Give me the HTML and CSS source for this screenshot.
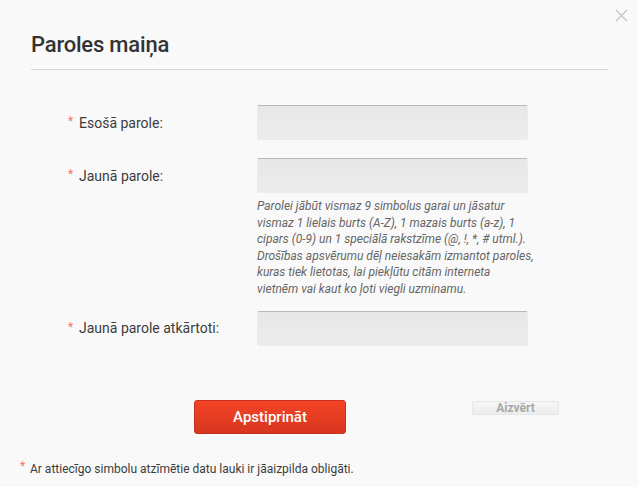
FILE: index.html
```
<!DOCTYPE html>
<html lang="lv">
<head>
<meta charset="utf-8">
<title>Paroles maiņa</title>
<link rel="stylesheet" href="styles.css">
</head>
<body>
<div class="dialog">
  <button class="close" aria-label="Aizvērt">
    <svg width="13" height="13" viewBox="0 0 13 13"><path d="M1 1L12 12M12 1L1 12" stroke="#c4c4c4" stroke-width="1.3" fill="none"/></svg>
  </button>
  <h1 class="title">Paroles maiņa</h1>
  <form class="form">
    <div class="row">
      <label class="label"><span class="req">*</span>Esošā parole:</label>
      <input class="field" type="password">
    </div>
    <div class="row row-second">
      <label class="label"><span class="req">*</span>Jaunā parole:</label>
      <input class="field" type="password">
    </div>
    <p class="hint">Parolei jābūt vismaz 9 simbolus garai un jāsatur<br>vismaz 1 lielais burts (A-Z), 1 mazais burts (a-z), 1<br>cipars (0-9) un 1 speciālā rakstzīme (@, !, *, # utml.).<br>Drošības apsvērumu dēļ neiesakām izmantot paroles,<br>kuras tiek lietotas, lai piekļūtu citām interneta<br>vietnēm vai kaut ko ļoti viegli uzminamu.</p>
    <div class="row row-third">
      <label class="label"><span class="req">*</span>Jaunā parole atkārtoti:</label>
      <input class="field" type="password">
    </div>
    <div class="actions">
      <button type="button" class="btn-primary">Apstiprināt</button>
      <button type="button" class="btn-secondary">Aizvērt</button>
    </div>
  </form>
  <p class="note"><span class="req">*</span>Ar attiecīgo simbolu atzīmētie datu lauki ir jāaizpilda obligāti.</p>
</div>
</body>
</html>
```
FILE: styles.css
```
html, body {
  margin: 0;
  padding: 0;
  background: #f9f9f9;
}
body {
  font-family: Roboto, "Liberation Sans", sans-serif;
  color: #3a3a3a;
}
.dialog {
  position: relative;
  width: 638px;
  height: 487px;
  box-sizing: border-box;
  padding: 0 30px 0 31px;
}
.close {
  position: absolute;
  top: 9px;
  right: 10px;
  padding: 0;
  border: 0;
  background: none;
  width: 13px;
  height: 13px;
}
.close svg { display: block; }
.title {
  margin: 0;
  padding-top: 31px;
  height: 38px;
  font-size: 22px;
  font-weight: 500;
  line-height: 28px;
  color: #333;
  border-bottom: 1px solid #d6d6d6;
  letter-spacing: -0.2px;
}
.form {
  margin: 0;
  padding-top: 34px;
}
.row {
  display: flex;
  align-items: center;
  height: 37px;
}
.row-second { margin-top: 16px; }
.row-third { margin-top: 12px; }
.label {
  display: flex;
  align-items: center;
  width: 189px;
  padding-left: 37px;
  font-size: 14px;
  color: #3c3c3c;
}
.req {
  color: #f07563;
  font-size: 12px;
  width: 11px;
  margin-top: -3px;
}
.field {
  box-sizing: border-box;
  width: 271px;
  height: 35px;
  margin: 0;
  border: 1px solid #ececec;
  border-top: 1px solid #b8b8b8;
  border-radius: 2px;
  background: linear-gradient(#e7e7e7, #ececec);
}
.hint {
  margin: 4px 0 0 226px;
  font-size: 12px;
  font-style: italic;
  line-height: 16.6px;
  color: #666;
}
.actions {
  display: flex;
  align-items: flex-start;
  margin-top: 53px;
  padding-left: 163px;
}
.btn-primary {
  width: 152px;
  height: 34px;
  border: 1px solid #c5331e;
  border-radius: 3px;
  background: linear-gradient(#f54427, #d7361e);
  color: #fff;
  font-family: Roboto, "Liberation Sans", sans-serif;
  font-size: 15px;
  font-weight: 500;
  padding: 0;
}
.btn-secondary {
  margin-left: 126px;
  margin-top: 1px;
  width: 87px;
  height: 14px;
  padding: 0;
  border: 1px solid #e6e6e6;
  border-radius: 1px;
  background: linear-gradient(#f6f6f6, #ececec);
  color: #a8a8a8;
  font-family: Roboto, "Liberation Sans", sans-serif;
  font-size: 12px;
  font-weight: 700;
  line-height: 12px;
}
.note {
  margin: 28px 0 0 -11px;
  font-size: 12px;
  color: #3c3c3c;
  display: flex;
}
.note .req { width: 10px; }
```
